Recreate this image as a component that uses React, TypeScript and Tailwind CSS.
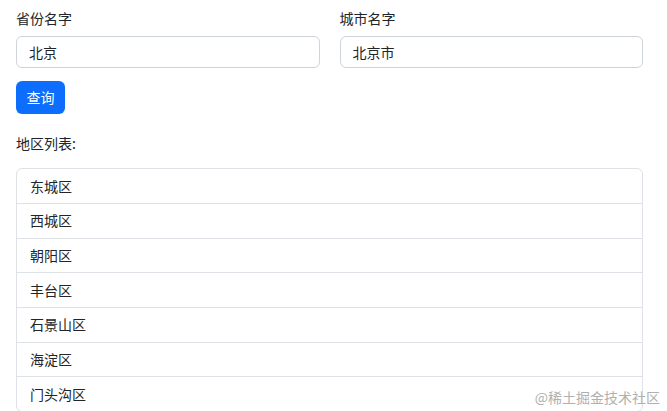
const districts = ['东城区', '西城区', '朝阳区', '丰台区', '石景山区', '海淀区', '门头沟区'];

export default function App() {
  return (
    <div
      className="relative h-[411px] overflow-hidden bg-white pl-4 pr-6 pt-2 text-[14px] leading-[21px] text-[#212529]"
      style={{ fontFamily: '"Microsoft YaHei", "Noto Sans CJK SC", sans-serif' }}
    >
      {/* Query form */}
      <div className="grid grid-cols-2 gap-5">
        <div>
          <label className="mb-[7px] block">省份名字</label>
          <input
            defaultValue="北京"
            className="block h-8 w-full rounded-md border border-[#ced4da] px-3 text-[14px] text-[#212529] outline-none"
          />
        </div>
        <div>
          <label className="mb-[7px] block">城市名字</label>
          <input
            defaultValue="北京市"
            className="block h-8 w-full rounded-md border border-[#ced4da] px-3 text-[14px] text-[#212529] outline-none"
          />
        </div>
      </div>

      <button className="mt-[13px] h-[33px] rounded-md bg-[#0d6efd] px-[10.5px] text-[14px] text-white">
        查询
      </button>

      <p className="mt-[19px]">地区列表:</p>

      {/* District list */}
      <ul className="mt-[14px] rounded-md border border-[#dee2e6]">
        {districts.map((name, i) => (
          <li
            key={name}
            className={
              i === 0
                ? 'h-[34px] px-[13px] py-[6.5px] leading-[21px]'
                : 'h-[34.67px] border-t border-[#dee2e6] px-[13px] py-[6.3px] leading-[21px]'
            }
          >
            {name}
          </li>
        ))}
      </ul>

      <div
        className="absolute bottom-[5px] right-[7px] text-[14px] leading-[18px] text-[#b0b0b0]"
        style={{ fontFamily: '"Noto Sans CJK SC", sans-serif' }}
      >
        @稀土掘金技术社区
      </div>
    </div>
  );
}
